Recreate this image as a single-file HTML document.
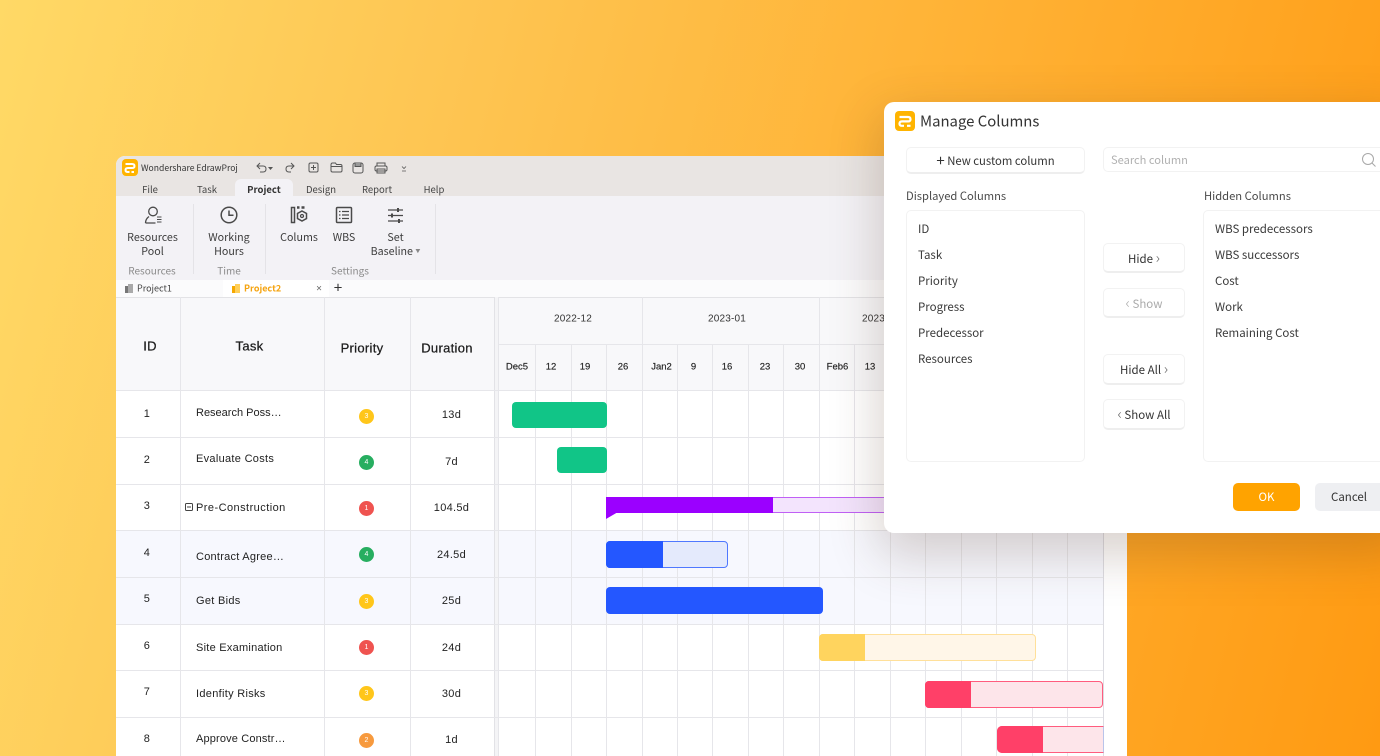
<!DOCTYPE html>
<html><head><meta charset="utf-8"><style>
*{box-sizing:border-box}
html,body{margin:0;padding:0}
body{width:1380px;height:756px;overflow:hidden;position:relative;background:linear-gradient(104deg,#ffd966 0%,#fec552 30%,#ffb235 62%,#ff9a12 100%);font-family:"Liberation Sans",sans-serif}
.a{position:absolute;white-space:nowrap}
.n{font-family:"Noto Sans CJK SC","Liberation Sans",sans-serif}
.c{transform:translate(-50%,-50%)}
.l{transform:translateY(-50%)}
#win{position:absolute;left:116px;top:156px;width:1011px;height:600px;background:#fff;border-radius:9px 0 0 0;overflow:hidden}
.hl{position:absolute;height:1px;background:#e6e6ea}
.vl{position:absolute;width:1px;background:#e6e6ea}
.t{font-size:11px;color:#222;letter-spacing:.3px}
.h{font-size:13px;color:#1c1c1c;letter-spacing:.3px;-webkit-text-stroke:.25px #1c1c1c}
.m{font-size:10px;color:#333;letter-spacing:.2px}
.d{font-size:9.5px;color:#222;-webkit-text-stroke:.15px #222}
.rib{font-size:10.7px;color:#3c3c3c;line-height:14px;text-align:center}
.tab{font-size:9.5px;color:#444}
.sec{font-size:10px;color:#8b8b8b}
.dot{position:absolute;width:15px;height:15px;border-radius:50%;color:#fff;font-size:7px;line-height:15px;text-align:center}
.bar{position:absolute;border-radius:4px}
.btn{position:absolute;background:#fff;border:1px solid #f2f2f2;border-bottom:2px solid #eeeeee;border-radius:5px;font-size:11.5px;color:#333;text-align:center}
.btn i{font-style:normal;font-size:15px;line-height:10px;color:#666;font-weight:300}
.dt{font-size:11.5px;color:#3a3a3a}
</style></head><body>

<div id="win">
 <div class="a" style="left:0;top:0;width:1011px;height:40px;background:#e9e5e3"></div>
 <div class="a" style="left:0;top:40px;width:1011px;height:84px;background:#f3f2f6"></div>
 <div class="a" style="left:0;top:124px;width:1011px;height:17px;background:#fbfbfc"></div>
 <div class="a" style="left:107px;top:124px;width:106px;height:17px;background:#fff"></div>
 <div class="a" style="left:119px;top:23px;width:58px;height:17px;background:#f3f2f6;border-radius:6px 6px 0 0"></div>

 <div class="a" style="left:6px;top:3px;width:16px;height:17px;background:#ffb400;border-radius:4px"></div>
 <svg class="a" style="left:6px;top:3px" width="16" height="17" viewBox="0 0 16 17" fill="none" stroke="#fff" stroke-width="2"><path d="M3.500 5h6.500q2.500 0 2.500 2t-2.500 2H6q-2.500 0-2.500 2t2.500 2h1.500M9.500 13h2.500"/></svg>
 <div class="a n l" style="left:25px;top:12px;font-size:8.600px;color:#333">Wondershare EdrawProj</div>

 <svg class="a" style="left:136px;top:4px" width="165" height="16" viewBox="0 0 165 16" fill="none" stroke="#555" stroke-width="1">
  <path d="M8 3L5 6l3 3M5 6h6q3 0 3 3t-3 3H8"/>
  <path d="M16 7h5l-2.500 3z" fill="#555" stroke="none"/>
  <path d="M39 3l3 3-3 3M42 6h-5q-3 0-3 3t3 3h2"/>
  <rect x="57" y="3" width="9" height="9" rx="1.500"/><path d="M59 7.500h5M61.500 5v5"/>
  <path d="M79 5q0-2 1.500-2h3l1 1.500h4q1.500 0 1.500 1.500v4.500q0 1.500-1.500 1.500h-8q-1.500 0-1.500-1.500zM79 6.500h11"/>
  <rect x="101" y="3" width="10" height="10" rx="2"/><path d="M103 3v3.500h6V3" fill="#999"/>
  <rect x="123" y="6" width="12" height="5" rx="1.500"/><rect x="125" y="3" width="8" height="3"/><rect x="125" y="9" width="8" height="4"/>
  <path d="M150 6.500l2 2 2-2M150 11h4" stroke-width=".8"/>
 </svg>

 <div class="a tab c" style="left:34px;top:32.500px;font-family:'Noto Sans CJK SC'">File</div>
 <div class="a tab c" style="left:91px;top:32.500px;font-family:'Noto Sans CJK SC'">Task</div>
 <div class="a tab c" style="left:148px;top:32.500px;font-weight:700;color:#333;font-family:'Noto Sans CJK SC'">Project</div>
 <div class="a tab c" style="left:205px;top:32.500px;font-family:'Noto Sans CJK SC'">Design</div>
 <div class="a tab c" style="left:261px;top:32.500px;font-family:'Noto Sans CJK SC'">Report</div>
 <div class="a tab c" style="left:318px;top:32.500px;font-family:'Noto Sans CJK SC'">Help</div>

 <svg class="a" style="left:0;top:40px" width="330" height="50" viewBox="0 0 330 50" fill="none" stroke="#4a4a4a" stroke-width="1.300">
  <circle cx="37" cy="15.500" r="4.300"/><path d="M29.500 27q0-4 3.500-6.500M29.500 27h10"/>
  <path d="M41 21h4.500M41 23.500h4.500M41 26h4.500" stroke-width="1"/>
  <circle cx="113" cy="19" r="7.800" stroke-width="1.500"/><path d="M113 14.500v4.800h4.500" stroke-width="1.500"/>
  <path d="M175.500 11.500h3v15h-3z" stroke-width="1.500"/><path d="M181 11.500h2.500M185.500 11.500h3" stroke-width="2.500"/>
  <path d="M186 15l4.500 2.500v5l-4.500 2.500-4.500-2.500v-5z" stroke-width="1.500"/><circle cx="186" cy="20" r="1.500"/>
  <rect x="220.500" y="11.500" width="15" height="15" rx="1" stroke-width="1.500"/><path d="M223 15.500h1.500M226 15.500h7M223 19h1.500M226 19h7M223 22.500h1.500M226 22.500h7"/>
  <path d="M272 14h15M272 19.500h15M272 25h15"/><path d="M282 12v4M276 17.500v4M283 23v4" stroke-width="2"/>
 </svg>

 <div class="a rib n c" style="left:36.500px;top:88.500px">Resources<br>Pool</div>
 <div class="a rib n c" style="left:113px;top:88.500px">Working<br>Hours</div>
 <div class="a rib n c" style="left:183px;top:81.500px">Colums</div>
 <div class="a rib n c" style="left:228px;top:81.500px">WBS</div>
 <div class="a rib n c" style="left:279.500px;top:88.500px">Set<br>Baseline <span style="font-size:5px;color:#888;vertical-align:2px">&#9660;</span></div>
 <div class="a sec n c" style="left:36px;top:114px">Resources</div>
 <div class="a sec n c" style="left:113px;top:114px">Time</div>
 <div class="a sec n c" style="left:234px;top:114px">Settings</div>
 <div class="vl" style="left:77px;top:48px;height:70px;background:#e4e3e7"></div>
 <div class="vl" style="left:149px;top:48px;height:70px;background:#e4e3e7"></div>
 <div class="vl" style="left:319px;top:48px;height:70px;background:#e4e3e7"></div>

 <svg class="a" style="left:8px;top:127px" width="10" height="11" viewBox="0 0 10 11"><rect x="1" y="3" width="6" height="7" fill="#777"/><rect x="4" y="1" width="5" height="9" fill="#aaa"/></svg>
 <div class="a n l" style="left:21px;top:132px;font-size:9px;color:#444">Project1</div>
 <svg class="a" style="left:115px;top:127px" width="10" height="11" viewBox="0 0 10 11"><rect x="1" y="3" width="6" height="7" fill="#f5a800"/><rect x="4" y="1" width="5" height="9" fill="#ffcf5a"/></svg>
 <div class="a n l" style="left:128px;top:132px;font-size:9px;color:#f5a30f;font-weight:700">Project2</div>
 <div class="a c" style="left:203px;top:132.500px;font-size:10px;color:#666">&#215;</div>
 <div class="a c" style="left:222px;top:132px;font-size:15px;color:#333">+</div>

 <div class="a" style="left:0;top:141px;width:1011px;height:94px;background:#f8f8fa;border-top:1px solid #e3e3e6"></div>
 <div class="a" style="left:0;top:375px;width:988px;height:93px;background:#f7f8fe"></div>
 <div class="a" style="left:378px;top:141px;width:5px;height:459px;background:#f4f4f6;border-left:1px solid #e2e2e6;border-right:1px solid #e2e2e6"></div>

 <div class="hl" style="left:0;top:234px;width:988px"></div>
 <div class="hl" style="left:0;top:281px;width:988px"></div>
 <div class="hl" style="left:0;top:328px;width:988px"></div>
 <div class="hl" style="left:0;top:374px;width:988px"></div>
 <div class="hl" style="left:0;top:421px;width:988px"></div>
 <div class="hl" style="left:0;top:468px;width:988px"></div>
 <div class="hl" style="left:0;top:514px;width:988px"></div>
 <div class="hl" style="left:0;top:561px;width:988px"></div>
 <div class="hl" style="left:382px;top:188px;width:606px"></div>
 <div class="vl" style="left:64px;top:141px;height:459px"></div>
 <div class="vl" style="left:208px;top:141px;height:459px"></div>
 <div class="vl" style="left:294px;top:141px;height:459px"></div>
 <div class="vl" style="left:382px;top:141px;height:459px"></div>
 <div class="vl" style="left:419px;top:188px;height:412px"></div>
 <div class="vl" style="left:455px;top:188px;height:412px"></div>
 <div class="vl" style="left:490px;top:188px;height:412px"></div>
 <div class="vl" style="left:526px;top:141px;height:459px"></div>
 <div class="vl" style="left:561px;top:188px;height:412px"></div>
 <div class="vl" style="left:596px;top:188px;height:412px"></div>
 <div class="vl" style="left:632px;top:188px;height:412px"></div>
 <div class="vl" style="left:667px;top:188px;height:412px"></div>
 <div class="vl" style="left:703px;top:141px;height:459px"></div>
 <div class="vl" style="left:738px;top:188px;height:412px"></div>
 <div class="vl" style="left:774px;top:188px;height:412px"></div>
 <div class="vl" style="left:809px;top:188px;height:412px"></div>
 <div class="vl" style="left:845px;top:188px;height:412px"></div>
 <div class="vl" style="left:880px;top:188px;height:412px"></div>
 <div class="vl" style="left:916px;top:188px;height:412px"></div>
 <div class="vl" style="left:951px;top:188px;height:412px"></div>
 <div class="vl" style="left:987px;top:141px;height:459px;background:#dcdce2"></div>

 <div class="a h c" style="left:34px;top:189.500px">ID</div>
 <div class="a h c" style="left:133.500px;top:189.500px">Task</div>
 <div class="a h c" style="left:246px;top:191.500px">Priority</div>
 <div class="a h c" style="left:331px;top:191.500px">Duration</div>

 <div class="a m c" style="left:457px;top:163px">2022-12</div>
 <div class="a m c" style="left:611px;top:163px">2023-01</div>
 <div class="a m c" style="left:765px;top:163px">2023-02</div>

 <div class="a d c" style="left:401px;top:211px">Dec5</div>
 <div class="a d c" style="left:435px;top:211px">12</div>
 <div class="a d c" style="left:469px;top:211px">19</div>
 <div class="a d c" style="left:507px;top:211px">26</div>
 <div class="a d c" style="left:545.500px;top:211px">Jan2</div>
 <div class="a d c" style="left:577.500px;top:211px">9</div>
 <div class="a d c" style="left:611px;top:211px">16</div>
 <div class="a d c" style="left:649px;top:211px">23</div>
 <div class="a d c" style="left:684px;top:211px">30</div>
 <div class="a d c" style="left:721.500px;top:211px">Feb6</div>
 <div class="a d c" style="left:754px;top:211px">13</div>

 <div class="a t c" style="left:31px;top:257.500px">1</div>
 <div class="a t c" style="left:31px;top:303.500px">2</div>
 <div class="a t c" style="left:31px;top:350px">3</div>
 <div class="a t c" style="left:31px;top:396.500px">4</div>
 <div class="a t c" style="left:31px;top:443px">5</div>
 <div class="a t c" style="left:31px;top:489.500px">6</div>
 <div class="a t c" style="left:31px;top:536px">7</div>
 <div class="a t c" style="left:31px;top:583px">8</div>

 <div class="a t l" style="left:80px;top:257px;letter-spacing:0">Research Poss…</div>
 <div class="a t l" style="left:80px;top:303px">Evaluate Costs</div>
 <svg class="a" style="left:69px;top:347px" width="8" height="8" viewBox="0 0 8 8" fill="none" stroke="#444"><rect x=".5" y=".5" width="7" height="7" rx="1"/><path d="M2 4h4"/></svg>
 <div class="a t l" style="left:80px;top:351.500px;letter-spacing:.45px">Pre-Construction</div>
 <div class="a t l" style="left:80px;top:401px;letter-spacing:.25px">Contract Agree…</div>
 <div class="a t l" style="left:80px;top:444.500px">Get Bids</div>
 <div class="a t l" style="left:80px;top:492px;letter-spacing:.25px">Site Examination</div>
 <div class="a t l" style="left:80px;top:538px">Idenfity Risks</div>
 <div class="a t l" style="left:80px;top:583px;letter-spacing:.15px">Approve Constr…</div>

 <div class="dot" style="left:243px;top:253px;background:#ffc61a">3</div>
 <div class="dot" style="left:243px;top:299px;background:#27ae60">4</div>
 <div class="dot" style="left:243px;top:345px;background:#ef5350">1</div>
 <div class="dot" style="left:243px;top:391px;background:#27ae60">4</div>
 <div class="dot" style="left:243px;top:438px;background:#ffc61a">3</div>
 <div class="dot" style="left:243px;top:484px;background:#ef5350">1</div>
 <div class="dot" style="left:243px;top:530px;background:#ffc61a">3</div>
 <div class="dot" style="left:243px;top:577px;background:#f79a3e">2</div>

 <div class="a t c" style="left:335.500px;top:259px">13d</div>
 <div class="a t c" style="left:335.500px;top:305.500px">7d</div>
 <div class="a t c" style="left:335.500px;top:352px">104.5d</div>
 <div class="a t c" style="left:335.500px;top:399px">24.5d</div>
 <div class="a t c" style="left:335.500px;top:444.500px">25d</div>
 <div class="a t c" style="left:335.500px;top:492px">24d</div>
 <div class="a t c" style="left:335.500px;top:537.500px">30d</div>
 <div class="a t c" style="left:335.500px;top:584px">1d</div>

 <div class="bar" style="left:395.500px;top:246px;width:95.500px;height:26px;background:#11c587"></div>
 <div class="bar" style="left:441px;top:291px;width:49.500px;height:26px;background:#11c587"></div>

 <div class="bar" style="left:490px;top:341px;width:290px;height:16px;background:#f3e4fd;border:1px solid #c060f5;border-left:0;border-right:0;border-radius:0"></div>
 <div class="bar" style="left:490px;top:341px;width:167px;height:16px;background:#9b00ff;border-radius:0"></div>
 <svg class="a" style="left:490px;top:356px" width="13" height="8"><path d="M0 0h12L0 7z" fill="#9b00ff"/></svg>

 <div class="bar" style="left:490px;top:385px;width:122px;height:27px;background:#e4eafc;border:1px solid #4f78ff"></div>
 <div class="bar" style="left:490px;top:385px;width:57px;height:27px;background:#2457ff;border-radius:4px 0 0 4px"></div>
 <div class="bar" style="left:490px;top:431px;width:217px;height:27px;background:#2457ff"></div>

 <div class="bar" style="left:703px;top:478px;width:217px;height:27px;background:#fff6e8;border:1px solid #ffe09a"></div>
 <div class="bar" style="left:703px;top:478px;width:46px;height:27px;background:#ffd45e;border-radius:4px 0 0 4px"></div>

 <div class="bar" style="left:809px;top:525px;width:178px;height:27px;background:#fde5ea;border:1px solid #ff5c7e"></div>
 <div class="bar" style="left:809px;top:525px;width:46px;height:27px;background:#ff4068;border-radius:4px 0 0 4px"></div>

 <div class="bar" style="left:881px;top:570px;width:107px;height:27px;background:#fde5ea;border:1px solid #ff5c7e;border-right:1px solid #b9c4ea;border-radius:5px 0 0 5px"></div>
 <div class="bar" style="left:881px;top:570px;width:46px;height:27px;background:#ff4068;border-radius:5px 0 0 5px"></div>
</div>

<div class="a" style="left:884px;top:102px;width:520px;height:431px;background:#fff;border-radius:10px;box-shadow:0 18px 50px 5px rgba(80,50,30,.22)"></div>

<div class="a" style="left:895px;top:111px;width:20px;height:20px;background:#ffb400;border-radius:4px"></div>
<svg class="a" style="left:895px;top:111px" width="20" height="20" viewBox="0 0 20 20" fill="none" stroke="#fff" stroke-width="2.200"><path d="M4.500 6h8.500q2.500 0 2.500 2.200T13 10.400H7q-2.500 0-2.500 2.200T7 14.800h2M12 14.800h3.500"/></svg>
<div class="a n l" style="left:920px;top:120.500px;font-size:14.900px;color:#333">Manage Columns</div>

<div class="btn n" style="left:906px;top:147px;width:179px;height:27px;line-height:25px;font-size:11.300px"><span style="font-size:15px;vertical-align:-1px">+</span> New custom column</div>
<div class="a" style="left:1103px;top:147px;width:290px;height:25px;border:1px solid #f2f2f2;border-radius:5px"></div>
<div class="a n l" style="left:1111px;top:160px;font-size:11.100px;color:#b0b0b0">Search column</div>
<svg class="a" style="left:1361px;top:152px" width="16" height="16" viewBox="0 0 16 16" fill="none" stroke="#a8a8a8"><circle cx="7" cy="7" r="5.500"/><path d="M11 11l3.500 3.500"/></svg>

<div class="a n l" style="left:906px;top:195.500px;font-size:11.200px;color:#4a4a4a">Displayed Columns</div>
<div class="a n l" style="left:1204px;top:195.500px;font-size:11.200px;color:#4a4a4a">Hidden Columns</div>

<div class="a" style="left:906px;top:210px;width:179px;height:252px;border:1px solid #f2f2f2;border-radius:5px"></div>
<div class="a" style="left:1203px;top:210px;width:200px;height:252px;border:1px solid #f2f2f2;border-radius:5px"></div>

<div class="a dt n l" style="left:918px;top:228.500px">ID</div>
<div class="a dt n l" style="left:918px;top:254.500px">Task</div>
<div class="a dt n l" style="left:918px;top:280.500px">Priority</div>
<div class="a dt n l" style="left:918px;top:306.500px">Progress</div>
<div class="a dt n l" style="left:918px;top:332.500px">Predecessor</div>
<div class="a dt n l" style="left:918px;top:358.500px">Resources</div>

<div class="a dt n l" style="left:1215px;top:228.500px">WBS predecessors</div>
<div class="a dt n l" style="left:1215px;top:254.500px">WBS successors</div>
<div class="a dt n l" style="left:1215px;top:280.500px">Cost</div>
<div class="a dt n l" style="left:1215px;top:306.500px">Work</div>
<div class="a dt n l" style="left:1215px;top:332.500px">Remaining Cost</div>

<div class="btn n" style="left:1103px;top:243px;width:82px;height:30px;line-height:28px;padding-top:1px">Hide <i>&#8250;</i></div>
<div class="btn n" style="left:1103px;top:288px;width:82px;height:30px;line-height:28px;padding-top:1px;color:#aaa"><i style="color:#aaa">&#8249;</i> Show</div>
<div class="btn n" style="left:1103px;top:354px;width:82px;height:31px;line-height:29px;padding-top:1px">Hide All <i>&#8250;</i></div>
<div class="btn n" style="left:1103px;top:399px;width:82px;height:31px;line-height:29px;padding-top:1px"><i>&#8249;</i> Show All</div>

<div class="a n" style="left:1233px;top:483px;width:67px;height:28px;background:#ffa300;border-radius:5px;color:#fff;font-size:11.500px;line-height:28px;text-align:center">OK</div>
<div class="a n" style="left:1315px;top:483px;width:80px;height:28px;background:#eeeff2;border-radius:5px;color:#333;font-size:11.500px;line-height:28px"><span style="position:absolute;left:16px">Cancel</span></div>

</body></html>
